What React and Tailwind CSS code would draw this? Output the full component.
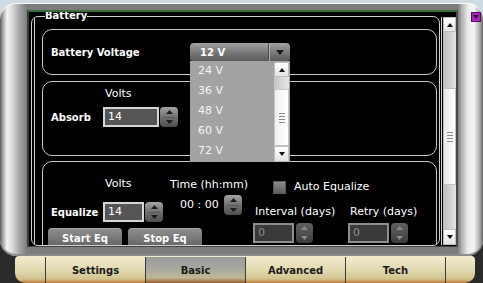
import React from "react";

function Tri({ dir = "up", color = "#1a1a1a", w = 7, h = 4 }) {
  const d = dir === "up" ? `M0 ${h} L${w / 2} 0 L${w} ${h}Z` : `M0 0 L${w / 2} ${h} L${w} 0Z`;
  return (
    <svg width={w} height={h} viewBox={`0 0 ${w} ${h}`}>
      <path d={d} fill={color} />
    </svg>
  );
}

function Spinner({ dim }) {
  return (
    <div
      className={
        dim
          ? "flex h-[20px] w-[17px] flex-col items-center justify-between rounded-[4px] bg-[linear-gradient(#606060,#3c3c3c)] py-[3px]"
          : "flex h-[20px] w-[18px] flex-col items-center justify-between rounded-[4px] bg-[linear-gradient(#a4a4a4,#707070_50%,#4e4e4e)] py-[3px]"
      }
    >
      <Tri dir="up" color={dim ? "#8a8a8a" : "#1c1c1c"} />
      <div className={dim ? "h-px w-[12px] bg-[#555]" : "h-px w-[12px] bg-[#5a5a5a]"} />
      <Tri dir="down" color={dim ? "#8a8a8a" : "#1c1c1c"} />
    </div>
  );
}

function Input({ value, w, dim }) {
  return (
    <div
      className={
        dim
          ? "flex h-[20px] items-center border-2 border-[#8e8e8e] bg-[#3a3a3a] pl-[3px] text-[11px] text-[#8c8c8c]"
          : "flex h-[20px] items-center border-2 border-[#d6d6d6] bg-[#555555] pl-[3px] text-[11px] text-white"
      }
      style={{ width: w }}
    >
      {value}
    </div>
  );
}

function ScrollBtn({ dir, h }) {
  return (
    <div
      className="flex items-center justify-center border border-[#bdbdbd] bg-[linear-gradient(#ffffff,#e2e2e2)]"
      style={{ height: h }}
    >
      <Tri dir={dir} w={6} h={4} color="#111" />
    </div>
  );
}

function Grip() {
  return (
    <div className="flex flex-col gap-[2px]">
      <div className="h-px w-[6px] bg-[#8a8a8a]" />
      <div className="h-px w-[6px] bg-[#8a8a8a]" />
      <div className="h-px w-[6px] bg-[#8a8a8a]" />
      <div className="h-px w-[6px] bg-[#8a8a8a]" />
    </div>
  );
}

function EqButton({ label }) {
  return (
    <div className="flex h-[20px] w-[74px] items-start justify-center rounded-t-[4px] border-t border-[#a8a8a8] bg-[linear-gradient(#8e8e8e,#606060)] pt-[2px] text-[10px] font-bold text-white">
      {label}
    </div>
  );
}

export default function App() {
  const volts = ["24 V", "36 V", "48 V", "60 V", "72 V"];
  const tabs = ["Settings", "Basic", "Advanced", "Tech"];

  return (
    <div className="relative h-[283px] w-[483px] overflow-hidden bg-[linear-gradient(#cfdbe3_0px,#cfdbe3_20px,#2a2a2a_20px)] pt-[3px] font-['DejaVu_Sans',sans-serif]">
      {/* silver frame */}
      <div className="h-[253px] rounded-[16px] bg-[linear-gradient(to_right,#5a5a5a_0px,#a8a8a8_3px,#f2f2f2_7px,#dcdcdc_12px,#a8a8a8_19px,#7c7c7c_27px,#7c7c7c_458px,#b4b4b4_462px,#ececec_468px,#f4f4f4_474px,#a8a8a8_480px,#606060_483px)] pb-[9px] pl-[27px] pr-[25px] pt-[7px] shadow-[inset_0_1px_0_#ffffff,inset_0_-2px_0_#8a8a8a]">
        <div className="flex h-full border-x-2 border-t-2 border-b border-l-[#3a3a3a] border-r-[#4a4a4a] border-t-[#3c6b3c] border-b-[#444] bg-black">
          {/* content column */}
          <div className="relative w-[412px] overflow-hidden pl-[2px] pt-[4px]">
            <div className="absolute left-[16px] top-[-2px] bg-black text-[10px] font-bold leading-[12px] text-white">
              Battery
            </div>
            <div className="mr-[1px] h-[230px] overflow-hidden rounded-[7px] border border-[#cfcfcf]">
              <div className="ml-[2px] h-full border-l border-[#cfcfcf] pl-[7px] pr-[2px] pt-[12px]">
                {/* panel 1 */}
                <div className="relative z-10 flex h-[46px] items-center rounded-[10px] border border-[#c8c8c8] pl-[8px]">
                  <div className="w-[139px] text-[10px] font-bold text-white">Battery Voltage</div>
                  <div className="relative">
                    <div className="flex h-[18px] w-[100px] items-center rounded-t-[4px] rounded-b-[2px] bg-[linear-gradient(#a2a2a2,#777777_55%,#5a5a5a)]">
                      <div className="w-[78px] pl-[10px] text-[10px] font-bold text-white">12 V</div>
                      <div className="h-full w-px bg-[#4a4a4a]" />
                      <div className="h-full w-px bg-[#b0b0b0]" />
                      <div className="flex flex-1 items-center justify-center">
                        <Tri dir="down" w={8} h={5} color="#1a1a1a" />
                      </div>
                    </div>
                    <div className="absolute left-0 top-[18px] flex h-[101px] w-[100px] bg-[#a3a3a3]">
                      <div className="flex-1">
                        {volts.map((v) => (
                          <div key={v} className="flex h-[20px] items-center pl-[8px] text-[11px] text-[#f4f4f4]">
                            {v}
                          </div>
                        ))}
                      </div>
                      <div className="mr-px mt-px flex w-[15px] flex-col">
                        <ScrollBtn dir="up" h={15} />
                        <div className="h-[12px] bg-[linear-gradient(to_right,#c4c4c4,#e6e6e6)]" />
                        <div className="flex h-[57px] items-center justify-center border border-[#c4c4c4] bg-[linear-gradient(to_right,#f0f0f0,#ffffff)]">
                          <Grip />
                        </div>
                        <div className="flex-1 bg-[linear-gradient(to_right,#c4c4c4,#e6e6e6)]" />
                        <ScrollBtn dir="down" h={16} />
                      </div>
                    </div>
                  </div>
                </div>

                {/* panel 2 */}
                <div className="mt-[6px] h-[75px] rounded-[10px] border border-[#c8c8c8] pt-[5px]">
                  <div className="ml-[62px] text-[11px] leading-[14px] text-white">Volts</div>
                  <div className="mt-[6px] flex items-center pl-[8px]">
                    <div className="w-[52px] text-[10px] font-bold text-white">Absorb</div>
                    <Input value="14" w={56} />
                    <div className="ml-[1px]">
                      <Spinner />
                    </div>
                  </div>
                </div>

                {/* panel 3 */}
                <div className="mt-[5px] flex h-[100px] rounded-[10px] border border-[#c8c8c8]">
                  <div className="w-[127px] shrink-0 pt-[15px]">
                    <div className="ml-[62px] text-[11px] leading-[14px] text-white">Volts</div>
                    <div className="mt-[11px] flex items-center pl-[8px]">
                      <div className="w-[52px] text-[10px] font-bold text-white">Equalize</div>
                      <Input value="14" w={41} />
                      <div className="ml-[1px]">
                        <Spinner />
                      </div>
                    </div>
                    <div className="mt-[6px] flex w-max gap-[6px] pl-[5px]">
                      <EqButton label="Start Eq" />
                      <EqButton label="Stop Eq" />
                    </div>
                  </div>
                  <div className="w-[83px] shrink-0 pt-[16px]">
                    <div className="text-[11px] leading-[14px] whitespace-nowrap text-white">Time (hh:mm)</div>
                    <div className="mt-[3px] flex items-center pl-[10px]">
                      <div className="w-[44px] text-[11px] text-white">00 : 00</div>
                      <Spinner />
                    </div>
                  </div>
                  <div className="flex-1 pt-[18px]">
                    <div className="ml-[20px] flex items-center gap-[8px]">
                      <div className="h-[13px] w-[13px] border border-[#5a5a5a] bg-[linear-gradient(#8a8a8a,#5e5e5e)]" />
                      <div className="text-[11px] leading-[14px] text-white">Auto Equalize</div>
                    </div>
                    <div className="mt-[11px] flex">
                      <div className="w-[95px]">
                        <div className="pl-[2px] text-[11px] leading-[14px] text-white">Interval (days)</div>
                        <div className="mt-[4px] flex items-center gap-[2px]">
                          <Input value="0" w={41} dim />
                          <Spinner dim />
                        </div>
                      </div>
                      <div>
                        <div className="pl-[2px] text-[11px] leading-[14px] text-white">Retry (days)</div>
                        <div className="mt-[4px] flex items-center gap-[2px]">
                          <Input value="0" w={41} dim />
                          <Spinner dim />
                        </div>
                      </div>
                    </div>
                  </div>
                </div>
              </div>
            </div>
          </div>

          {/* main scrollbar */}
          <div className="flex w-[15px] pb-[1px] pt-[5px]">
            <div className="w-px bg-[#d8d8d8]" />
            <div className="ml-px flex w-[13px] flex-col">
              <ScrollBtn dir="up" h={15} />
              <div className="h-[56px] bg-[linear-gradient(to_right,#bcbcbc,#e4e4e4)]" />
              <div className="flex h-[97px] items-center justify-center border border-[#c0c0c0] bg-[linear-gradient(to_right,#e8e8e8,#ffffff)]">
                <Grip />
              </div>
              <div className="flex-1 bg-[linear-gradient(to_right,#bcbcbc,#e4e4e4)]" />
              <ScrollBtn dir="down" h={16} />
            </div>
          </div>
        </div>
      </div>

      {/* purple corner button */}
      <div className="absolute right-[2px] top-[12px] flex h-[10px] w-[10px] items-center justify-center border border-[#5c0a6a] bg-[#b022c4]">
        <Tri dir="down" w={6} h={4} color="#2a0530" />
      </div>

      {/* tab bar */}
      <div className="ml-[15px] flex h-[27px] w-[460px] overflow-hidden rounded-b-[10px] rounded-t-[4px] bg-[linear-gradient(#f2ecd0,#e0d7ad_55%,#d2c38e_85%,#c0783a)] pt-px">
        <div className="w-[31px] border-r border-[#3a3a3a]" />
        {tabs.map((t) => (
          <div
            key={t}
            className={
              t === "Basic"
                ? "flex w-[100px] items-center justify-center border-r border-[#3a3a3a] bg-[linear-gradient(#9c9c9c,#a8a8a0_45%,#c0b894_80%,#9a5a30)] text-[10px] font-bold text-[#1a1a1a]"
                : "flex w-[100px] items-center justify-center border-r border-[#3a3a3a] text-[10px] font-bold text-[#1a1a1a]"
            }
          >
            {t}
          </div>
        ))}
        <div className="flex-1" />
      </div>
    </div>
  );
}
